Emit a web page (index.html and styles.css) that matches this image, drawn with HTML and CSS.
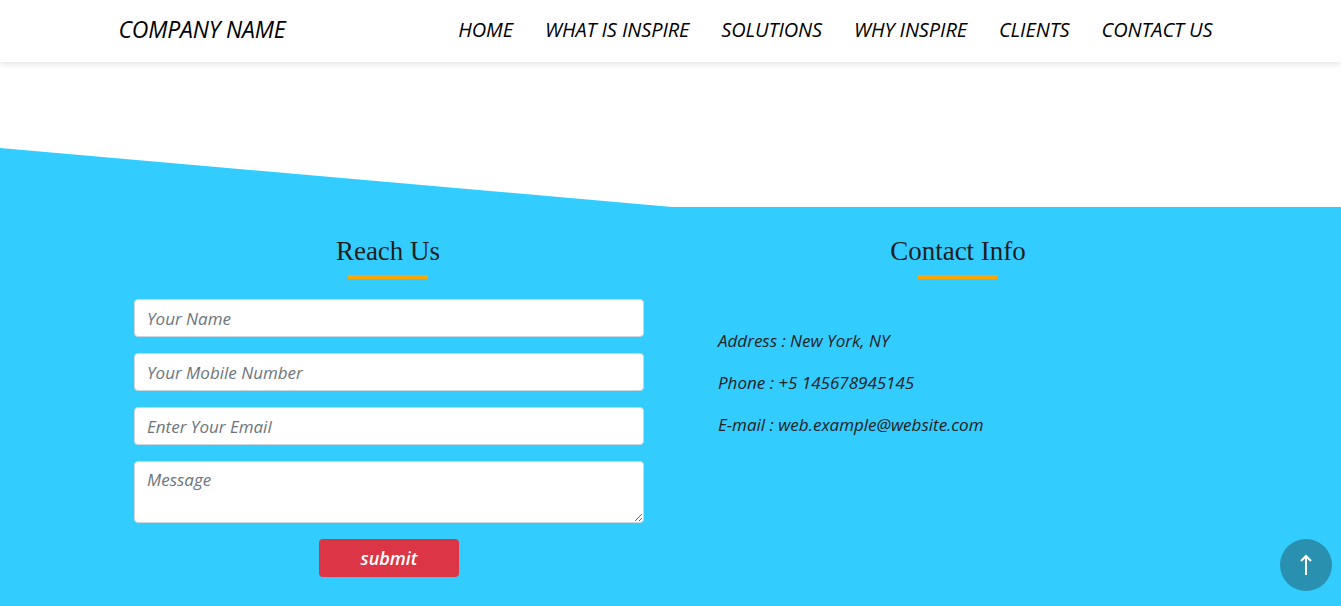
FILE: index.html
```html
<!DOCTYPE html>
<html lang="en">
<head>
<meta charset="utf-8">
<title>Company Name</title>
<link rel="stylesheet" href="styles.css">
</head>
<body>
<header class="topbar">
  <div class="container topbar-inner">
    <a class="brand" href="#">COMPANY NAME</a>
    <nav class="nav">
      <a href="#">HOME</a>
      <a href="#">WHAT IS INSPIRE</a>
      <a href="#">SOLUTIONS</a>
      <a href="#">WHY INSPIRE</a>
      <a href="#">CLIENTS</a>
      <a href="#">CONTACT US</a>
    </nav>
  </div>
</header>

<section class="contact">
  <div class="container contact-grid">
    <div class="col">
      <h2 class="title">Reach Us</h2>
      <form class="form">
        <input class="field" type="text" placeholder="Your Name">
        <input class="field" type="text" placeholder="Your Mobile Number">
        <input class="field" type="email" placeholder="Enter Your Email">
        <textarea class="field area" placeholder="Message"></textarea>
        <button class="submit" type="button">submit</button>
      </form>
    </div>
    <div class="col">
      <h2 class="title">Contact Info</h2>
      <div class="info">
        <p>Address : New York, NY</p>
        <p>Phone : +5 145678945145</p>
        <p>E-mail : web.example@website.com</p>
      </div>
    </div>
  </div>
  <a class="totop" href="#">
    <svg width="14" height="22" viewBox="0 0 14 22"><path d="M7 21V2M2 7l5-5 5 5" fill="none" stroke="#fff" stroke-width="2"/></svg>
  </a>
</section>
</body>
</html>
```
FILE: styles.css
```css
* { box-sizing: border-box; }
html, body { margin: 0; padding: 0; }
body {
  font-family: "Open Sans", "DejaVu Sans", sans-serif;
  font-style: italic;
  color: #222;
  background: #fff;
  height: 606px;
  overflow: hidden;
}
.container {
  width: 1140px;
  margin: 0 auto;
  padding: 0 15px;
}
.topbar {
  height: 62px;
  background: #fff;
  box-shadow: 0 2px 6px rgba(0,0,0,0.12);
  position: relative;
  z-index: 2;
}
.topbar-inner {
  display: flex;
  align-items: center;
  justify-content: space-between;
  height: 58px;
}
.brand {
  color: #000;
  text-decoration: none;
  font-size: 23px;
  letter-spacing: -0.2px;
  padding-left: 3px;
}
.nav { display: flex; margin-right: -3px; }
.nav a {
  color: #000;
  text-decoration: none;
  font-size: 20px;
  letter-spacing: -0.1px;
  padding: 0 16px;
}
.contact {
  margin-top: 86px;
  background: #33ccff;
  height: 458px;
  clip-path: polygon(0 0, 672px 59px, 100% 59px, 100% 100%, 0 100%);
  padding-top: 86px;
  position: relative;
}
.contact-grid {
  display: grid;
  grid-template-columns: 570px 570px;
  padding: 0;
  margin-left: 103px;
}
.title {
  font-family: "Liberation Serif", "DejaVu Serif", serif;
  font-style: normal;
  font-weight: normal;
  font-size: 27px;
  color: #1e1e1e;
  text-align: center;
  margin: 0;
  line-height: 34px;
}
.title::after {
  content: "";
  display: block;
  width: 80px;
  height: 4px;
  background: #ffa500;
  margin: 7px auto 0;
}
.form {
  display: flex;
  flex-direction: column;
  align-items: center;
  gap: 16px;
  padding: 20px 29px 0 31px;
}
.field {
  width: 100%;
  height: 38px;
  border: 1px solid #ced4da;
  border-radius: 4px;
  padding: 0 12px;
  font-family: "Open Sans", "DejaVu Sans", sans-serif;
  font-style: italic;
  font-size: 17px;
  color: #495057;
  background: #fff;
}
.field::placeholder { color: #6c757d; }
.area {
  height: 62px;
  padding-top: 6px;
  resize: vertical;
}
.submit {
  width: 140px;
  height: 38px;
  border: 0;
  border-radius: 4px;
  background: #dc3545;
  color: #fff;
  font-family: "Open Sans", "DejaVu Sans", sans-serif;
  font-style: italic;
  font-weight: 600;
  font-size: 18px;
}
.info { padding: 50px 0 0 45px; }
.info p {
  margin: 0 0 19px;
  font-size: 17px;
  line-height: 23px;
}
.totop {
  position: absolute;
  right: 9px;
  bottom: 15px;
  width: 52px;
  height: 52px;
  border-radius: 50%;
  background: #2a90b0;
  display: flex;
  align-items: center;
  justify-content: center;
}
```
